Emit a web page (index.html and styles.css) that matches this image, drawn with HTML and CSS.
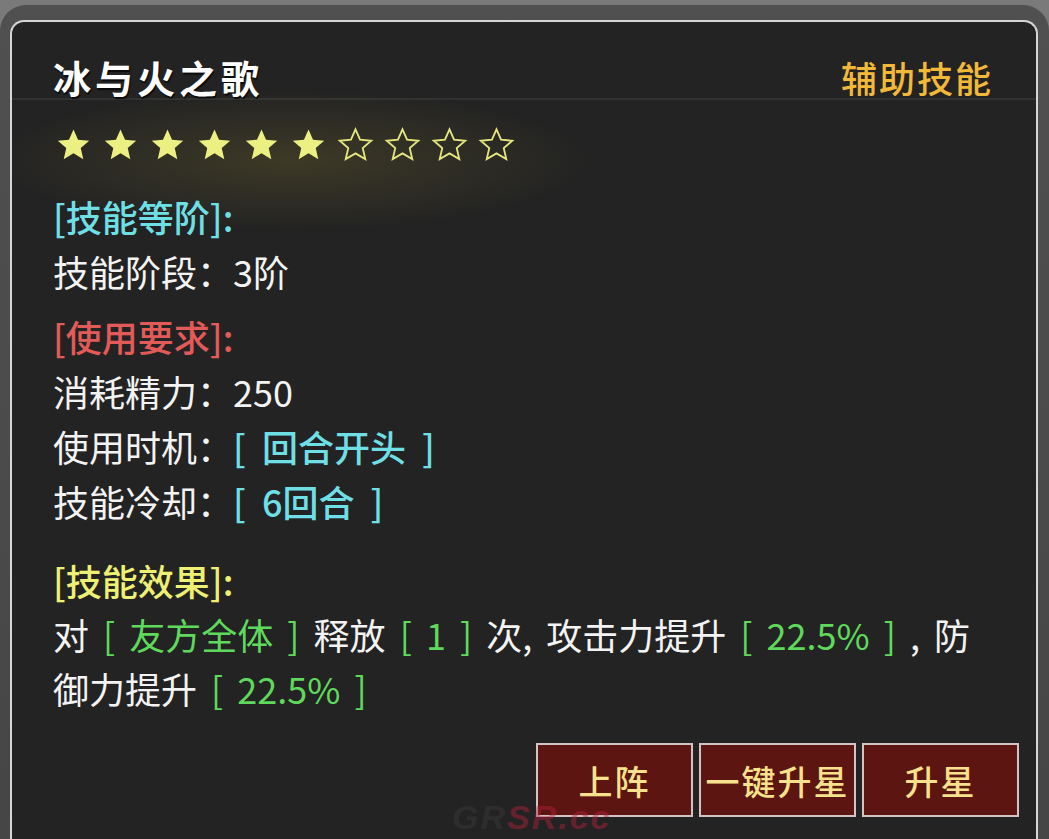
FILE: index.html
```html
<!DOCTYPE html>
<html lang="zh">
<head>
<meta charset="utf-8">
<title>冰与火之歌</title>
<link rel="stylesheet" href="styles.css">
</head>
<body>
<div class="frame">
  <div class="panel">
    <div class="header">
      <div class="title">冰与火之歌</div>
      <div class="type">辅助技能</div>
    </div>
    <div class="content">
      <div class="stars">
        <svg class="star" viewBox="0 0 24 24"><path class="on" d="M12 2.2l2.95 6.7 7.25.65-5.5 4.8 1.65 7.15L12 17.75 5.65 21.5 7.3 14.35 1.8 9.55l7.25-.65z"/></svg>
        <svg class="star" viewBox="0 0 24 24"><path class="on" d="M12 2.2l2.95 6.7 7.25.65-5.5 4.8 1.65 7.15L12 17.75 5.65 21.5 7.3 14.35 1.8 9.55l7.25-.65z"/></svg>
        <svg class="star" viewBox="0 0 24 24"><path class="on" d="M12 2.2l2.95 6.7 7.25.65-5.5 4.8 1.65 7.15L12 17.75 5.65 21.5 7.3 14.35 1.8 9.55l7.25-.65z"/></svg>
        <svg class="star" viewBox="0 0 24 24"><path class="on" d="M12 2.2l2.95 6.7 7.25.65-5.5 4.8 1.65 7.15L12 17.75 5.65 21.5 7.3 14.35 1.8 9.55l7.25-.65z"/></svg>
        <svg class="star" viewBox="0 0 24 24"><path class="on" d="M12 2.2l2.95 6.7 7.25.65-5.5 4.8 1.65 7.15L12 17.75 5.65 21.5 7.3 14.35 1.8 9.55l7.25-.65z"/></svg>
        <svg class="star" viewBox="0 0 24 24"><path class="on" d="M12 2.2l2.95 6.7 7.25.65-5.5 4.8 1.65 7.15L12 17.75 5.65 21.5 7.3 14.35 1.8 9.55l7.25-.65z"/></svg>
        <svg class="star" viewBox="0 0 24 24"><path class="off" d="M12 2.2l2.95 6.7 7.25.65-5.5 4.8 1.65 7.15L12 17.75 5.65 21.5 7.3 14.35 1.8 9.55l7.25-.65z"/></svg>
        <svg class="star" viewBox="0 0 24 24"><path class="off" d="M12 2.2l2.95 6.7 7.25.65-5.5 4.8 1.65 7.15L12 17.75 5.65 21.5 7.3 14.35 1.8 9.55l7.25-.65z"/></svg>
        <svg class="star" viewBox="0 0 24 24"><path class="off" d="M12 2.2l2.95 6.7 7.25.65-5.5 4.8 1.65 7.15L12 17.75 5.65 21.5 7.3 14.35 1.8 9.55l7.25-.65z"/></svg>
        <svg class="star" viewBox="0 0 24 24"><path class="off" d="M12 2.2l2.95 6.7 7.25.65-5.5 4.8 1.65 7.15L12 17.75 5.65 21.5 7.3 14.35 1.8 9.55l7.25-.65z"/></svg>
      </div>

      <div class="section s1">
        <div class="line head cyan">[技能等阶]:</div>
        <div class="line">技能阶段：3阶</div>
      </div>

      <div class="section s2">
        <div class="line head red">[使用要求]:</div>
        <div class="line">消耗精力：250</div>
        <div class="line">使用时机：<span class="cyan val">[ 回合开头 ]</span></div>
        <div class="line">技能冷却：<span class="cyan val">[ 6回合 ]</span></div>
      </div>

      <div class="section s3">
        <div class="line head yellow">[技能效果]:</div>
        <p class="effect">对 <span class="green">[ 友方全体 ]</span> 释放 <span class="green">[ 1 ]</span> 次, 攻击力提升 <span class="green">[ 22.5% ]</span> , 防<br>御力提升 <span class="green">[ 22.5% ]</span></p>
      </div>

      <div class="buttons">
        <div class="btn">上阵</div>
        <div class="btn">一键升星</div>
        <div class="btn">升星</div>
      </div>
    </div>
    <div class="watermark"><span class="wm-dark">GR</span><span class="wm-red">SR.cc</span></div>
  </div>
</div>
</body>
</html>
```

FILE: styles.css
```css
* { box-sizing: border-box; }

html, body {
  margin: 0;
  padding: 0;
  height: 100%;
  overflow: hidden;
}

body {
  background: #7a7a7a;
  font-family: "Noto Sans CJK SC", "Noto Sans", sans-serif;
  color: #f3f3f3;
}

.frame {
  margin-top: 5px;
  background: linear-gradient(180deg, #505050 0%, #454545 100%);
  border-radius: 26px 26px 0 0;
  padding: 15px 11px 0 10px;
  height: 900px;
}

.panel {
  position: relative;
  height: 880px;
  border: 2px solid #d6d6d6;
  border-bottom: none;
  border-radius: 14px 14px 0 0;
  background:
    radial-gradient(ellipse 300px 70px at 280px 138px, rgba(115, 105, 45, 0.32), rgba(115, 105, 45, 0) 100%),
    #232323;
}

.header {
  display: flex;
  justify-content: space-between;
  align-items: flex-start;
  padding: 35px 43px 0 41px;
  height: 78px;
  border-bottom: 2px solid rgba(255, 255, 255, 0.07);
}

.title {
  font-size: 38px;
  line-height: 40px;
  font-weight: 700;
  letter-spacing: 4px;
  color: #ffffff;
  text-shadow: 1px 2px 1px rgba(0, 0, 0, 0.7);
}

.type {
  font-size: 36px;
  line-height: 40px;
  font-weight: 500;
  letter-spacing: 2px;
  color: #f2b83a;
}

.content {
  padding: 0 17px 0 41px;
}

.stars {
  display: flex;
  gap: 10px;
  margin-top: 22px;
  margin-left: 2px;
  height: 44px;
  align-items: center;
}

.star {
  width: 37px;
  height: 37px;
  display: block;
}

.star .on {
  fill: #ecef82;
}

.star .off {
  fill: none;
  stroke: #e4e67e;
  stroke-width: 1.2;
  stroke-linejoin: miter;
}

.section .line {
  font-size: 36px;
  line-height: 55px;
  white-space: nowrap;
  word-spacing: 8px;
}

.head {
  font-weight: 500;
}

.s1 { margin-top: 23px; }
.s2 { margin-top: 10px; }
.s3 { margin-top: 24px; }

.cyan { color: #6fdfe6; }
.red { color: #e35b58; }
.yellow { color: #eef074; }
.green { color: #5fd95b; }

.val { font-weight: 500; }

.effect {
  margin: 0;
  font-size: 36px;
  line-height: 54px;
  margin-top: -1px;
  word-spacing: 6px;
}

.buttons {
  display: flex;
  justify-content: flex-end;
  gap: 6px;
  margin-top: 28px;
}

.btn {
  width: 157px;
  height: 74px;
  border: 2px solid #d4c3c3;
  background: #5d1512;
  color: #f6e18c;
  font-size: 34px;
  font-weight: 500;
  letter-spacing: 2px;
  display: flex;
  align-items: center;
  justify-content: center;
}

.watermark {
  position: absolute;
  left: 440px;
  top: 776px;
  font-family: "Liberation Sans", sans-serif;
  font-style: italic;
  font-weight: 700;
  font-size: 34px;
  letter-spacing: 2px;
  opacity: 0.45;
}

.wm-dark { color: #3a3a3a; }
.wm-red { color: #b8203f; }
```
